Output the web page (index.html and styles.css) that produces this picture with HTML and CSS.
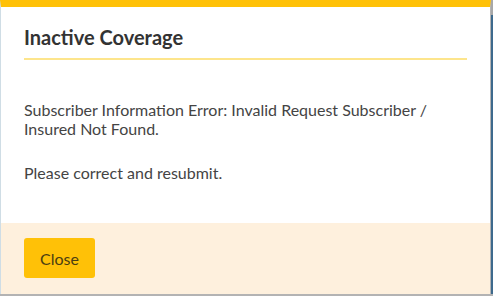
FILE: index.html
```html
<!DOCTYPE html>
<html lang="en">
<head>
    <meta charset="UTF-8">
    <meta name="viewport" content="width=device-width, initial-scale=1.0">
    <title>Inactive Coverage</title>
    <link rel="stylesheet" href="styles.css">
</head>
<body>
    <div class="page">
        <div class="modal">
            <div class="modal-header">
                <h2>Inactive Coverage</h2>
            </div>
            <div class="modal-body">
                <p>Subscriber Information Error: Invalid Request Subscriber / Insured Not Found.</p>
                <p>Please correct and resubmit.</p>
            </div>
            <div class="modal-footer">
                <button class="btn-close">Close</button>
            </div>
        </div>
        <div class="scroll-strip"></div>
    </div>
</body>
</html>
```

FILE: styles.css
```css
body {
    margin: 0;
    font-family: Lato, "Open Sans", sans-serif;
    background-color: #b3b3b3;
    color: #444;
}
.page {
    display: flex;
    height: 294px;
}
.modal {
    width: 490px;
    display: flex;
    flex-direction: column;
    background-color: #fff;
    border-top: 7px solid #ffc107;
    border-left: 1px solid #cfdde5;
    border-right: 1px solid #b5b5b5;
}
.modal-header {
    padding: 0 23px;
}
.modal-header h2 {
    margin: 0;
    padding: 19px 0 10px;
    font-size: 20px;
    font-weight: 700;
    line-height: 22px;
    color: #333;
    border-bottom: 2px solid #fde58c;
}
.modal-body {
    flex: 1;
    padding: 40px 23px 0;
}
.modal-body p {
    margin: 0 0 25px;
    font-size: 16px;
    line-height: 19px;
}
.modal-footer {
    background-color: #fef0dd;
    padding: 15px 23px 16px;
}
.btn-close {
    width: 71px;
    height: 40px;
    border: none;
    border-radius: 3px;
    background-color: #ffc107;
    color: #4b3e12;
    font-family: inherit;
    font-size: 16px;
    cursor: pointer;
}
.scroll-strip {
    width: 2px;
    background: linear-gradient(#a8a8a8 0 15px, #3e6a8d 15px);
}
```
